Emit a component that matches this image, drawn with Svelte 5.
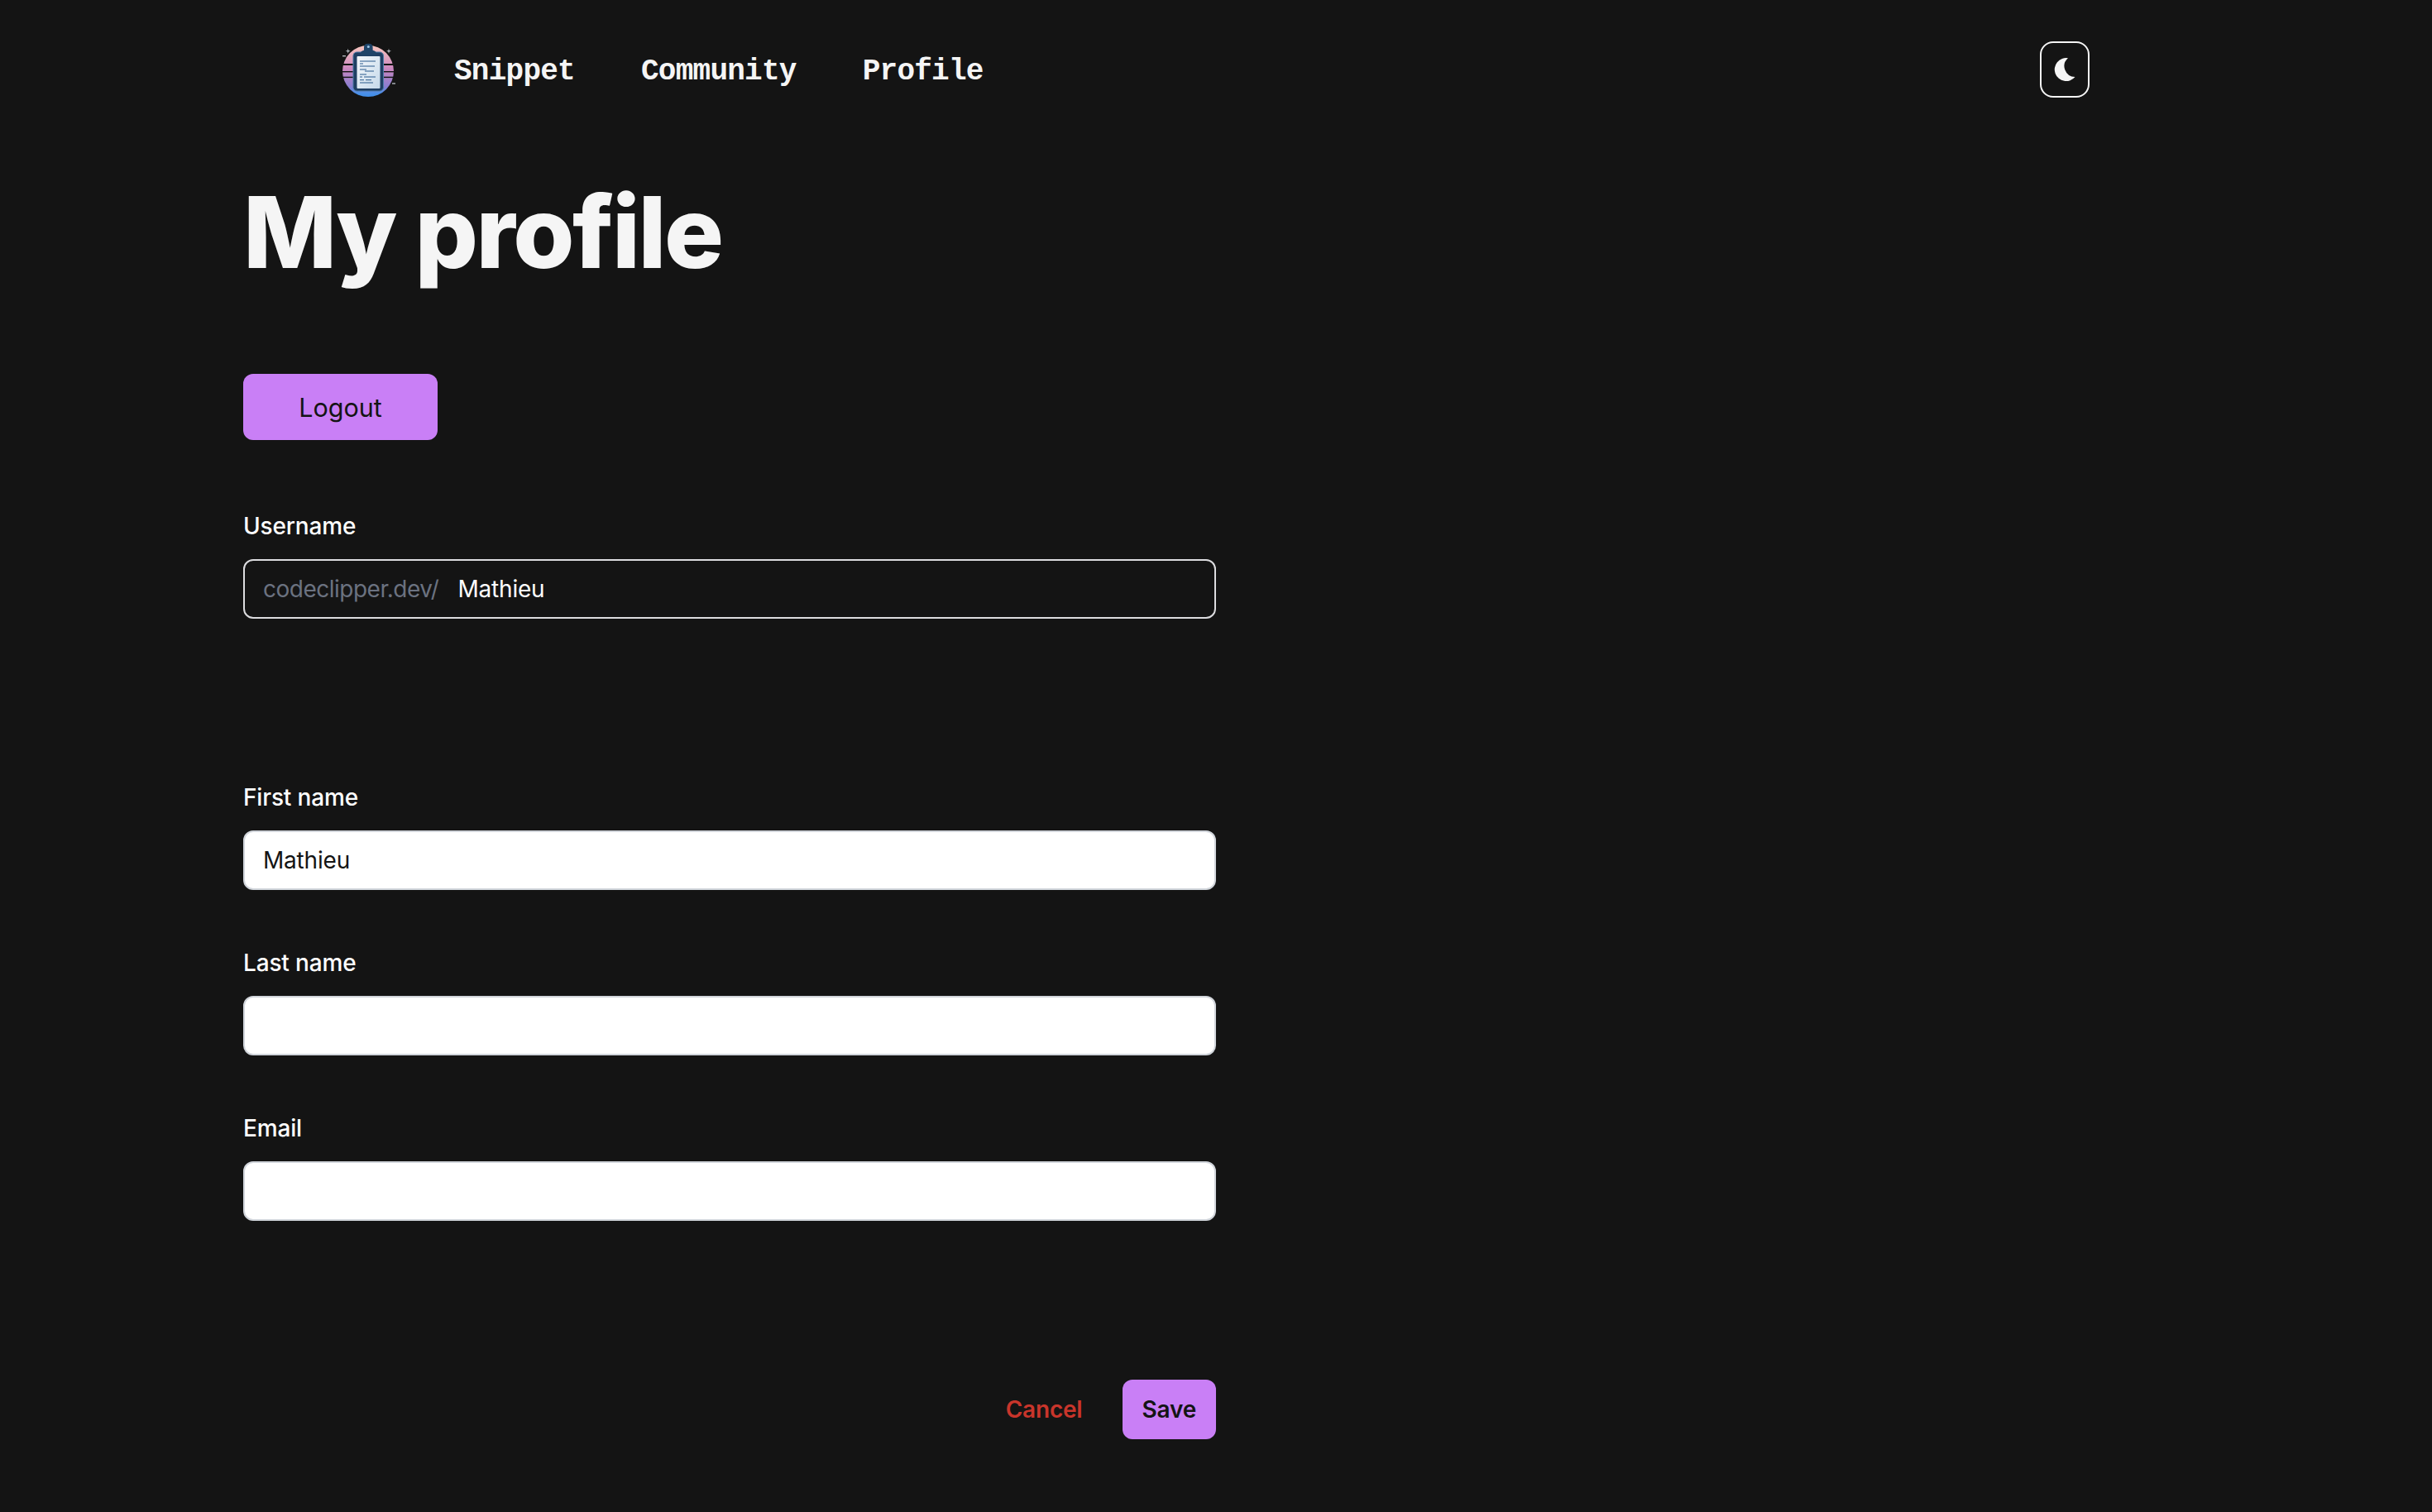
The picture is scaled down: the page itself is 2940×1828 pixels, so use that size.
<script>
	const fields = [
		{ label: 'First name', value: 'Mathieu' },
		{ label: 'Last name', value: '' },
		{ label: 'Email', value: '' }
	];
	const links = ['Snippet', 'Community', 'Profile'];
</script>

<header class="topbar">
	<nav class="nav">
		<svg class="logo" viewBox="0 0 70 70" width="70" height="70" aria-label="Code Clipper">
			<defs>
				<linearGradient id="disc" x1="0" y1="0" x2="0" y2="1">
					<stop offset="0" stop-color="#f9c8bf" />
					<stop offset="0.45" stop-color="#cb87bf" />
					<stop offset="0.8" stop-color="#8a7ed0" />
					<stop offset="0.93" stop-color="#4a90e8" />
					<stop offset="1" stop-color="#3f8ee8" />
				</linearGradient>
				<linearGradient id="sheet" x1="0" y1="0" x2="1" y2="1">
					<stop offset="0" stop-color="#f4f8fb" />
					<stop offset="1" stop-color="#c5d9ea" />
				</linearGradient>
			</defs>
			<circle cx="35" cy="36" r="31" fill="url(#disc)" />
			<rect x="2" y="27" width="66" height="2" fill="#141414" />
			<rect x="2" y="36" width="66" height="1.4" fill="#141414" />
			<rect x="2" y="42.7" width="66" height="1.4" fill="#141414" />
			<rect x="17" y="13" width="36.5" height="47" rx="4.5" fill="#1f3f63" stroke="#4a7aa6" stroke-width="1" />
			<rect x="21.5" y="18" width="28" height="39" rx="1" fill="url(#sheet)" />
			<path d="M26 16v-2q0-2 2-2.5l2-.8V7q0-4.3 5.3-4.3T40.6 7v3.7l2 .8q2 .5 2 2.5v2q0 1-2 1H28q-2 0-2-1z" fill="#1f4468" />
			<circle cx="35.3" cy="6.5" r="1.5" fill="#9cc4e4" />
			<g stroke="#2a5a8c" stroke-width="1">
				<path d="M25 24h19M25 27h4M25 30h18M25 34h8M31 36h11M25 40h8M25 43h3M30 43h14M25 46.7h5M32 46.7h7M25 50h16" />
			</g>
			<g fill="#aeb4ba">
				<path d="M10.7 8.7l.7 2.3 2.3.7-2.3.7-.7 2.3-.7-2.3-2.3-.7 2.3-.7z" />
				<path d="M60 8.7l.7 2.3 2.3.7-2.3.7-.7 2.3-.7-2.3-2.3-.7 2.3-.7z" />
				<rect x="4" y="17" width="4" height="1.4" />
				<rect x="64" y="50.3" width="4" height="1.4" />
			</g>
		</svg>
		{#each links as link}
			<a class="nav-link" href="#{link.toLowerCase()}">{link}</a>
		{/each}
	</nav>
	<button class="theme" aria-label="Toggle theme">
		<svg viewBox="0 0 30 30" width="30" height="30">
			<path d="M19 1.2A14 14 0 1 0 27.5 24A13 13 0 0 1 19 1.2Z" fill="#f5f5f5" />
		</svg>
	</button>
</header>

<main class="page">
	<h1>My profile</h1>
	<button class="logout">Logout</button>

	<form class="form">
		<div class="field username">
			<label for="username">Username</label>
			<div class="prefixed">
				<span class="prefix">codeclipper.dev/</span>
				<input id="username" class="bare" value="Mathieu" />
			</div>
		</div>

		<div class="stack">
			{#each fields as f}
				<div class="field">
					<label for={f.label}>{f.label}</label>
					<input id={f.label} class="text" value={f.value} />
				</div>
			{/each}
		</div>

		<div class="actions">
			<button type="button" class="cancel">Cancel</button>
			<button type="button" class="save">Save</button>
		</div>
	</form>
</main>

<style>
	:global(body) {
		background: #141414;
		font-family: Inter, "Liberation Sans", sans-serif;
		color: #f5f5f5;
	}

	.topbar {
		display: flex;
		align-items: center;
		justify-content: space-between;
		height: 168px;
		padding: 0 414px 0 410px;
	}

	.nav {
		display: flex;
		align-items: center;
		gap: 80px;
	}

	.logo {
		margin-right: -11px;
		margin-top: 2px;
	}

	.nav-link {
		font-family: "Liberation Mono", monospace;
		font-weight: 700;
		font-size: 36px;
		letter-spacing: -0.75px;
		color: #f5f5f5;
		text-decoration: none;
		position: relative;
		top: 2px;
	}

	.theme {
		width: 60px;
		height: 68px;
		display: flex;
		align-items: center;
		justify-content: center;
		background: transparent;
		border: 2px solid #f5f5f5;
		border-radius: 16px;
		padding: 0;
	}

	.page {
		padding-left: 294px;
	}

	h1 {
		margin: 43px 0 0;
		font-size: 120px;
		line-height: 140px;
		font-weight: 800;
		letter-spacing: -2.5px;
	}

	.logout {
		display: block;
		margin-top: 101px;
		width: 235px;
		height: 80px;
		background: #c97ff6;
		border: none;
		border-radius: 12px;
		color: #141414;
		font-family: inherit;
		font-size: 30.5px;
		padding: 0;
	}

	.form {
		width: 1176px;
		margin-top: 84px;
	}

	.field {
		display: flex;
		flex-direction: column;
		gap: 20px;
	}

	label {
		font-size: 28px;
		line-height: 40px;
		font-weight: 500;
		color: #fff;
		letter-spacing: -0.15px;
	}

	.prefixed {
		display: flex;
		align-items: center;
		height: 72px;
		box-sizing: border-box;
		padding: 0 22px;
		border: 2px solid #dcdcdf;
		border-radius: 12px;
		font-size: 28px;
	}

	.prefix {
		color: #6b7280;
		letter-spacing: -0.5px;
	}

	.bare {
		flex: 1;
		margin-left: 23px;
		background: transparent;
		border: none;
		outline: none;
		padding: 0;
		font: inherit;
		letter-spacing: -0.2px;
		color: #fff;
	}

	.stack {
		display: flex;
		flex-direction: column;
		gap: 68px;
		margin-top: 196px;
	}

	.text {
		height: 72px;
		box-sizing: border-box;
		padding: 0 22px;
		background: #fff;
		border: 2px solid #d1d5db;
		border-radius: 12px;
		font-family: inherit;
		font-size: 28px;
		letter-spacing: -0.2px;
		color: #141414;
	}

	.actions {
		display: flex;
		justify-content: flex-end;
		align-items: center;
		gap: 48px;
		margin-top: 192px;
	}

	.cancel {
		background: none;
		border: none;
		padding: 0;
		font-family: inherit;
		font-size: 28px;
		font-weight: 600;
		letter-spacing: -0.2px;
		color: #c9352b;
	}

	.save {
		height: 72px;
		padding: 0 24px;
		background: #c97ff6;
		border: none;
		border-radius: 12px;
		font-family: inherit;
		font-size: 28px;
		font-weight: 600;
		letter-spacing: -0.2px;
		color: #141414;
	}
</style>
